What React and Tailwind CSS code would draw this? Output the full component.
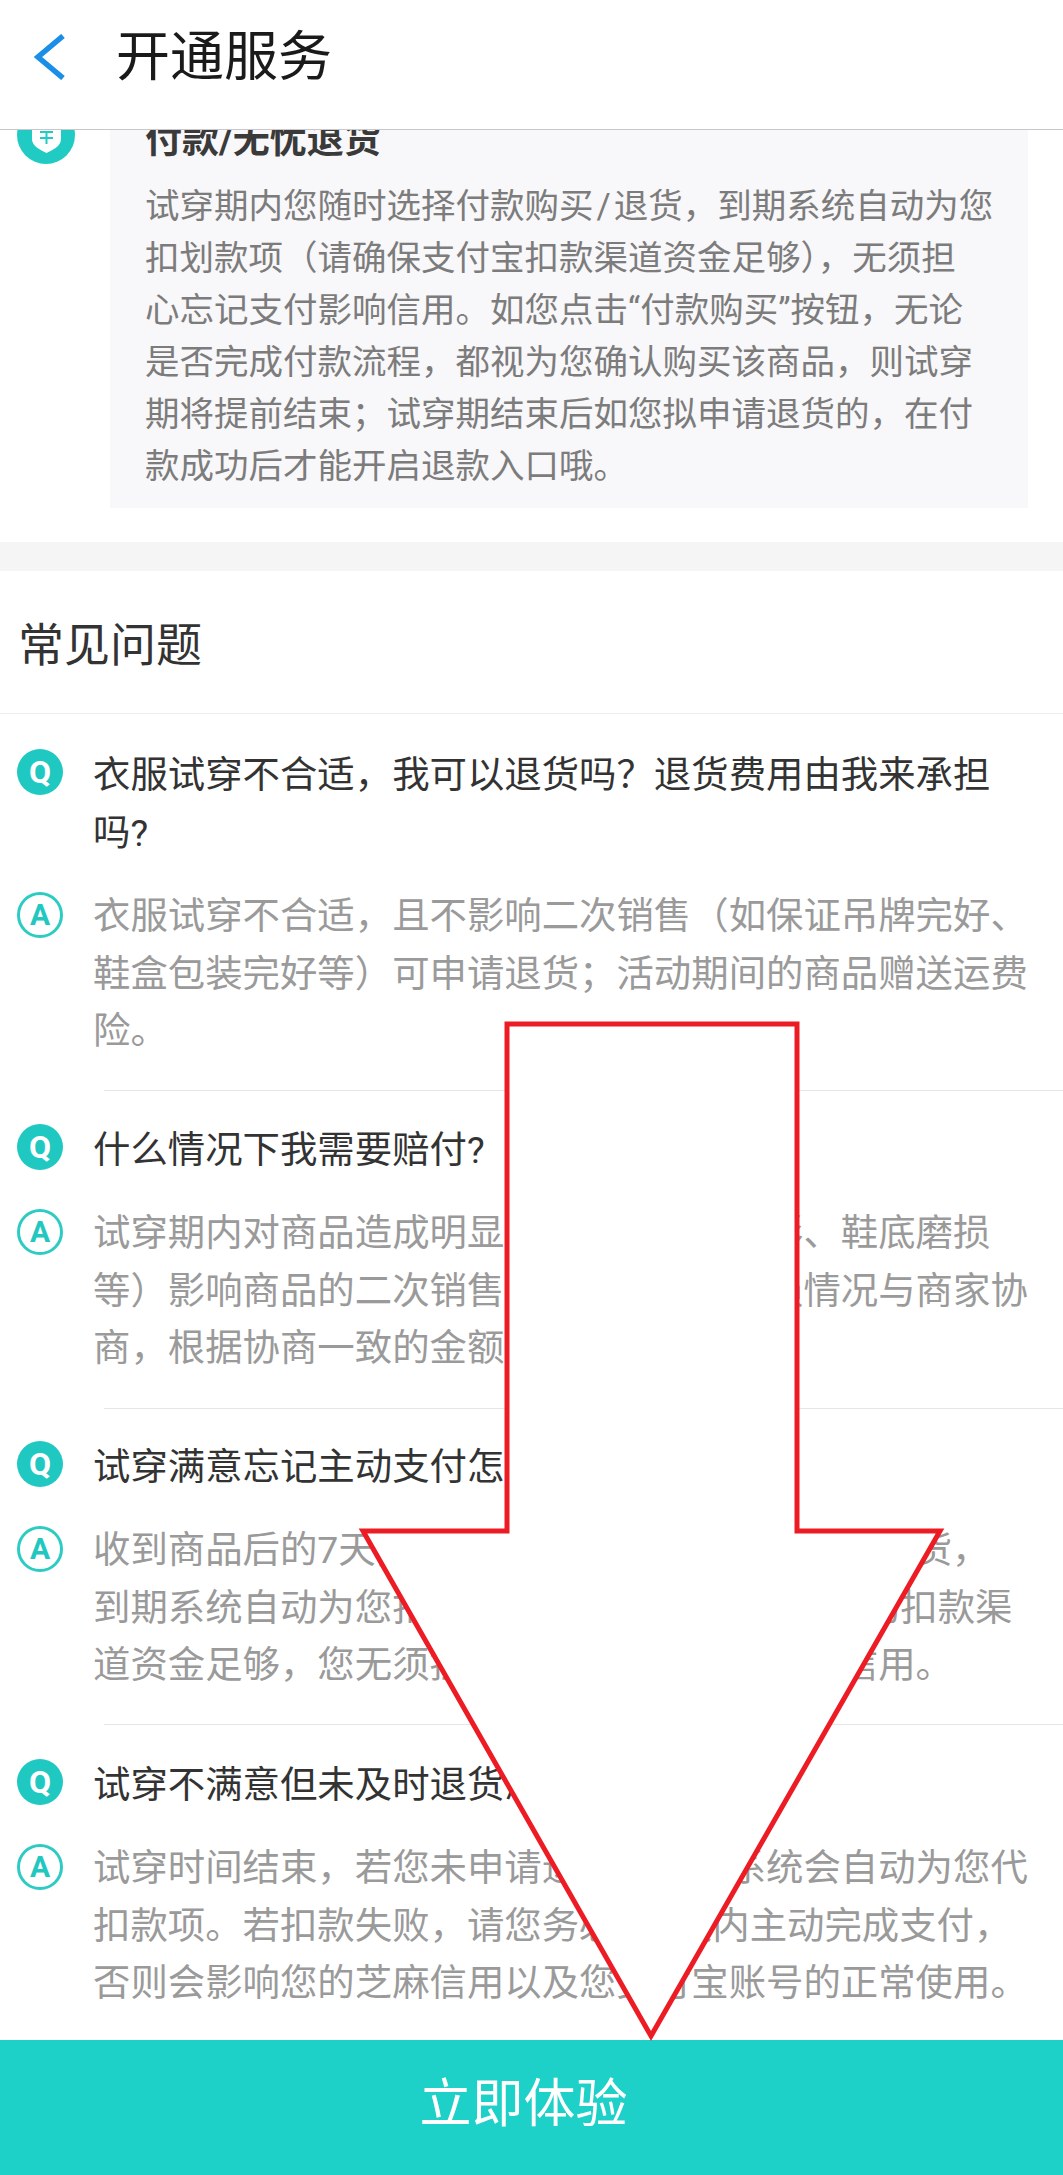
import React from 'react';

const panelLines = [
  <>试穿期内您随时选择付款购买<span className="px-[3px]">/</span>退货，到期系统自动为您</>,
  '扣划款项（请确保支付宝扣款渠道资金足够），无须担',
  '心忘记支付影响信用。如您点击“付款购买”按钮，无论',
  '是否完成付款流程，都视为您确认购买该商品，则试穿',
  '期将提前结束；试穿期结束后如您拟申请退货的，在付',
  '款成功后才能开启退款入口哦。',
];

const faqs = [
  {
    space: 'pt-[33px] pb-[29px]',
    q: ['衣服试穿不合适，我可以退货吗？退货费用由我来承担', '吗?'],
    a: [
      '衣服试穿不合适，且不影响二次销售（如保证吊牌完好、',
      '鞋盒包装完好等）可申请退货；活动期间的商品赠送运费',
      '险。',
    ],
  },
  {
    space: 'pt-[31px] pb-[30px]',
    q: ['什么情况下我需要赔付?'],
    a: [
      '试穿期内对商品造成明显污损、破损、变形、鞋底磨损',
      '等）影响商品的二次销售，需根据实际受损情况与商家协',
      '商，根据协商一致的金额进行赔付。',
    ],
  },
  {
    space: 'pt-[30px] pb-[29px]',
    q: ['试穿满意忘记主动支付怎么办?'],
    a: [
      '收到商品后的7天内，您可随时选择付款/购买或退货，',
      '到期系统自动为您扣划款项 (请确保您的支付宝的扣款渠',
      '道资金足够，您无须担心忘记支付而影响您的信用。',
    ],
  },
  {
    space: 'pt-[32px] pb-[31px]',
    q: ['试穿不满意但未及时退货怎么办?'],
    a: [
      '试穿时间结束，若您未申请退货，到期系统会自动为您代',
      '扣款项。若扣款失败，请您务必在7天内主动完成支付，',
      '否则会影响您的芝麻信用以及您支付宝账号的正常使用。',
    ],
  },
];

const YenIcon = () => (
  <svg width="58" height="58" viewBox="0 0 58 58" className="shrink-0 mt-[6px]">
    <circle cx="29" cy="29" r="29" fill="#1fcbc3" />
    <path d="M15 10 H44 V33 C44 40 36 44 29.5 47 C23 44 15 40 15 33 Z" fill="#fff" />
    <path d="M23 26 H36 M23 32 H36 M29.5 26 V38" stroke="#1fcbc3" strokeWidth="2" fill="none" />
  </svg>
);

const Faq = ({ item, first }) => (
  <div className={first ? item.space : `ml-[104px] border-t border-[#e6e6e6] ${item.space}`}>
    <div className={first ? 'flex gap-[30px] pl-[17px]' : '-ml-[104px] flex gap-[30px] pl-[17px]'}>
      <div className="w-[46px] h-[46px] mt-[2px] shrink-0 rounded-full bg-[#1fc9c1] flex items-center justify-center text-white font-bold text-[32px] leading-none">
        Q
      </div>
      <div className="text-[37.4px] leading-[57.5px] text-[#333333] whitespace-nowrap">
        {item.q.map(line => <div key={line}>{line}</div>)}
      </div>
    </div>
    <div className={first ? 'flex gap-[30px] pl-[17px] mt-[26px]' : '-ml-[104px] flex gap-[30px] pl-[17px] mt-[26px]'}>
      <div className="w-[46px] h-[46px] mt-[4px] shrink-0 rounded-full border-[3px] border-[#2ccbc3] flex items-center justify-center text-[#22c8c0] font-bold text-[30px] leading-none">
        A
      </div>
      <div className="text-[37.4px] leading-[57.5px] text-[#9a9a9a] whitespace-nowrap">
        {item.a.map(line => <div key={line}>{line}</div>)}
      </div>
    </div>
  </div>
);

export default function App() {
  return (
    <div className="relative w-[1063px] h-[2175px] overflow-hidden bg-white flex flex-col font-['Roboto','Noto_Sans_CJK_SC',sans-serif]">
      {/* Header */}
      <header className="h-[130px] shrink-0 border-b border-[#c9c7cb] bg-white flex items-start pl-[34px]">
        <svg width="32" height="46" viewBox="0 0 32 46" className="mt-[34px]" fill="none">
          <path d="M29 2 L4 23 L29 44" stroke="#1a8fe8" strokeWidth="5.5" />
        </svg>
        <h1 className="ml-[50px] mt-[29px] text-[54px] leading-[58px] font-normal text-[#1a1a1a]">开通服务</h1>
      </header>

      <main className="flex-1 overflow-hidden">
        {/* Intro step, scrolled partly under the header */}
        <section className="-mt-[30px] flex gap-[35px] pl-[17px] pr-[35px] pb-[34px]">
          <YenIcon />
          <div className="flex-1 min-w-0 bg-[#f8f7f9] px-[35px] pt-[15px] pb-[16px]">
            <h3 className="text-[37px] leading-[52px] font-bold text-[#3a3a3a] mb-[13px]">付款/无忧退货</h3>
            <div className="text-[34.5px] leading-[52px] text-[#7c7c7c] whitespace-nowrap">
              {panelLines.map((line, i) => <div key={i}>{line}</div>)}
            </div>
          </div>
        </section>

        <div className="h-[29px] bg-[#f5f5f5]" />

        <section>
          <h2 className="pl-[18px] h-[143px] pt-[45px] text-[46px] leading-[58px] font-normal text-[#333333] border-b border-[#eeeeee]">
            常见问题
          </h2>
          {faqs.map((item, i) => <Faq key={i} item={item} first={i === 0} />)}
        </section>
      </main>

      <button className="h-[135px] shrink-0 bg-[#1dd0c8] text-white text-[52px] leading-none pb-[6px] pr-[16px] relative">
        立即体验
      </button>

      {/* Annotation arrow drawn over the screenshot */}
      <svg width="1063" height="2175" viewBox="0 0 1063 2175" className="absolute inset-0 pointer-events-none">
        <polygon
          points="507,1024 797,1024 797,1531 940,1531 651,2036 363,1531 507,1531"
          fill="#ffffff"
          stroke="#ed1c24"
          strokeWidth="5"
        />
      </svg>
    </div>
  );
}
